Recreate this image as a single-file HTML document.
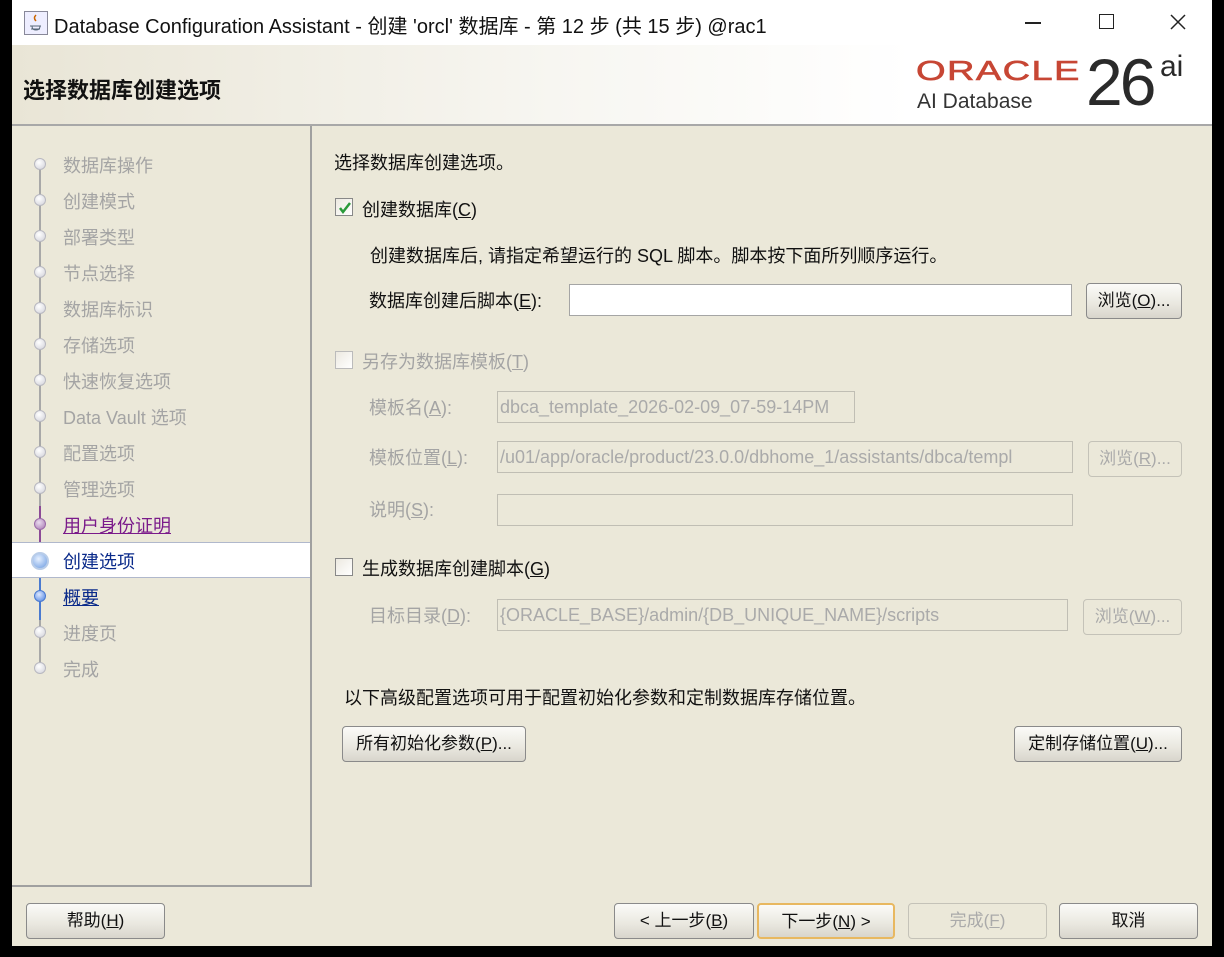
<!DOCTYPE html>
<html><head><meta charset="utf-8"><style>
*{margin:0;padding:0;box-sizing:border-box}
body{width:1224px;height:957px;background:#000;position:relative;overflow:hidden;font-family:"Liberation Sans","Noto Sans CJK SC",sans-serif;font-size:18px;color:#111}
.a{position:absolute;white-space:nowrap}
#win{position:absolute;left:12px;top:0;width:1200px;height:946px;background:#ebe8d9}
#title{position:absolute;left:0;top:0;width:1200px;height:45px;background:#fff}
#hdr{position:absolute;left:0;top:45px;width:1200px;height:81px;background:linear-gradient(90deg,#e9e5d6 0%,#f7f6f1 45%,#fff 75%);border-bottom:2px solid #a8a8a8}
#left{position:absolute;left:0;top:126px;width:300px;height:761px;border-right:2px solid #a0a0a0;border-bottom:2px solid #a0a0a0}
.nav{position:absolute;left:51px;color:#a4a4a4;font-size:18px}
.dot{position:absolute;left:22px;width:12px;height:12px;border-radius:50%;background:radial-gradient(circle at 40% 35%,#fff,#d0d0d8);border:1px solid #b8b8c0}
.btn{position:absolute;height:36px;border:1px solid #8a8a8a;border-radius:4px;background:linear-gradient(#fbfbf8,#e9e7df 60%,#d8d5cc);text-align:center;line-height:33px;font-size:17px;color:#111}
.dis{color:#aaa;border-color:#c4c2b8;background:#ebe8d9}
.inp{position:absolute;height:32px;border:1px solid #a5a5a5;background:#fff}
.inpd{position:absolute;height:32px;border:1px solid #c0beb4;background:#ebe8d9;color:#aaa;font-size:18px;line-height:30px;padding-left:2px;overflow:hidden;white-space:nowrap}
.cb{position:absolute;width:18px;height:18px;border:1px solid #888;background:linear-gradient(135deg,#ece9e0,#fff)}
.gray{color:#a4a4a4}
u{text-decoration:underline}
</style></head><body>
<div id="win">
<div id="title">
 <svg class="a" style="left:12px;top:11px" width="24" height="24" viewBox="0 0 24 24"><rect x="0.5" y="0.5" width="23" height="23" fill="#eef" stroke="#889"/><path d="M6 15h11M7 18h9M8 15q0 4 4 4t4-4" stroke="#567" fill="none"/><path d="M12 4q-3 3 0 6" stroke="#c60" fill="none" stroke-width="1.5"/></svg>
 <div class="a" style="left:42px;top:10px;font-size:20px">Database Configuration Assistant - 创建 'orcl' 数据库 - 第 12 步 (共 15 步) @rac1</div>
 <div class="a" style="left:1013px;top:22px;width:16px;height:1.5px;background:#222"></div>
 <div class="a" style="left:1087px;top:14px;width:15px;height:15px;border:1.5px solid #222"></div>
 <svg class="a" style="left:1158px;top:14px" width="16" height="16"><path d="M1 1L15 15M15 1L1 15" stroke="#222" stroke-width="1.5"/></svg>
</div>
<div id="hdr">
 <div class="a" style="left:11px;top:28px;font-size:22px;font-weight:bold">选择数据库创建选项</div>
 <div class="a" style="left:904px;top:11px;font-size:28px;line-height:30px;color:#c74634;letter-spacing:1px;transform:scaleX(1.36);transform-origin:left;-webkit-text-stroke:0.6px #c74634">ORACLE</div>
 <div class="a" style="left:905px;top:45px;font-size:21px;color:#333">AI Database</div>
 <div class="a" style="left:1074px;top:2px;font-size:66px;line-height:70px;color:#2a2a2a;letter-spacing:-3px">26</div>
 <div class="a" style="left:1148px;top:6px;font-size:30px;line-height:32px;color:#2a2a2a">ai</div>
</div>
<div id="left">
 <div class="a" style="left:27px;top:38px;width:2px;height:360px;background:#a8a8a8"></div>
 <div class="a" style="left:27px;top:380px;width:2px;height:54px;background:#8c4a96"></div>
 <div class="a" style="left:27px;top:434px;width:2px;height:60px;background:#4a7ad0"></div>
 <div class="a" style="left:27px;top:494px;width:2px;height:50px;background:#a8a8a8"></div>
 <div class="a" style="left:0;top:416px;width:298px;height:36px;background:#fff;border-top:1px solid #b0b8cc;border-bottom:1px solid #b0b8cc"></div>
 <div class="dot" style="top:32px"></div><div class="nav" style="top:26px">数据库操作</div>
 <div class="dot" style="top:68px"></div><div class="nav" style="top:62px">创建模式</div>
 <div class="dot" style="top:104px"></div><div class="nav" style="top:98px">部署类型</div>
 <div class="dot" style="top:140px"></div><div class="nav" style="top:134px">节点选择</div>
 <div class="dot" style="top:176px"></div><div class="nav" style="top:170px">数据库标识</div>
 <div class="dot" style="top:212px"></div><div class="nav" style="top:206px">存储选项</div>
 <div class="dot" style="top:248px"></div><div class="nav" style="top:242px">快速恢复选项</div>
 <div class="dot" style="top:284px"></div><div class="nav" style="top:278px">Data Vault 选项</div>
 <div class="dot" style="top:320px"></div><div class="nav" style="top:314px">配置选项</div>
 <div class="dot" style="top:356px"></div><div class="nav" style="top:350px">管理选项</div>
 <div class="dot" style="top:392px;background:radial-gradient(circle at 40% 35%,#eadcef,#a676b2);border-color:#9a6aa8"></div><div class="nav" style="top:386px;color:#7a1a8a"><u>用户身份证明</u></div>
 <div class="dot" style="top:426px;left:19px;width:18px;height:18px;background:radial-gradient(circle at 40% 35%,#e6f0ff,#6a9ae0);border:2px solid #b8cce8"></div><div class="nav" style="top:422px;color:#0a2a8a">创建选项</div>
 <div class="dot" style="top:464px;background:radial-gradient(circle at 40% 35%,#dde8ff,#4a80e0);border-color:#4a7ad0"></div><div class="nav" style="top:458px;color:#0a2a8a"><u>概要</u></div>
 <div class="dot" style="top:500px"></div><div class="nav" style="top:494px">进度页</div>
 <div class="dot" style="top:536px"></div><div class="nav" style="top:530px">完成</div>
</div>
<div class="a" style="left:322px;top:149px">选择数据库创建选项。</div>
<div class="cb" style="left:323px;top:198px"></div>
<svg class="a" style="left:325px;top:200px" width="16" height="16"><path d="M3 8l3 4 7-9" stroke="#2a9a3a" stroke-width="2.5" fill="none"/></svg>
<div class="a" style="left:350px;top:196px">创建数据库(<u>C</u>)</div>
<div class="a" style="left:358px;top:242px">创建数据库后, 请指定希望运行的 SQL 脚本。脚本按下面所列顺序运行。</div>
<div class="a" style="left:357px;top:287px">数据库创建后脚本(<u>E</u>):</div>
<div class="inp" style="left:557px;top:284px;width:503px"></div>
<div class="btn" style="left:1074px;top:283px;width:96px">浏览(<u>O</u>)...</div>
<div class="cb" style="left:323px;top:351px;border-color:#bbb"></div>
<div class="a gray" style="left:350px;top:348px">另存为数据库模板(<u>T</u>)</div>
<div class="a gray" style="left:357px;top:394px">模板名(<u>A</u>):</div>
<div class="inpd" style="left:485px;top:391px;width:358px">dbca_template_2026-02-09_07-59-14PM</div>
<div class="a gray" style="left:357px;top:444px">模板位置(<u>L</u>):</div>
<div class="inpd" style="left:485px;top:441px;width:576px">/u01/app/oracle/product/23.0.0/dbhome_1/assistants/dbca/templ</div>
<div class="btn dis" style="left:1076px;top:441px;width:94px">浏览(<u>R</u>)...</div>
<div class="a gray" style="left:357px;top:496px">说明(<u>S</u>):</div>
<div class="inpd" style="left:485px;top:494px;width:576px"></div>
<div class="cb" style="left:323px;top:558px"></div>
<div class="a" style="left:350px;top:555px">生成数据库创建脚本(<u>G</u>)</div>
<div class="a gray" style="left:357px;top:602px">目标目录(<u>D</u>):</div>
<div class="inpd" style="left:485px;top:599px;width:571px">{ORACLE_BASE}/admin/{DB_UNIQUE_NAME}/scripts</div>
<div class="btn dis" style="left:1071px;top:599px;width:99px">浏览(<u>W</u>)...</div>
<div class="a" style="left:332px;top:684px">以下高级配置选项可用于配置初始化参数和定制数据库存储位置。</div>
<div class="btn" style="left:330px;top:726px;width:184px">所有初始化参数(<u>P</u>)...</div>
<div class="btn" style="left:1002px;top:726px;width:168px">定制存储位置(<u>U</u>)...</div>
<div class="btn" style="left:14px;top:903px;width:139px">帮助(<u>H</u>)</div>
<div class="btn" style="left:602px;top:903px;width:140px">&lt; 上一步(<u>B</u>)</div>
<div class="btn" style="left:745px;top:903px;width:138px;border:2px solid #e8b860">下一步(<u>N</u>) &gt;</div>
<div class="btn dis" style="left:896px;top:903px;width:139px">完成(<u>F</u>)</div>
<div class="btn" style="left:1047px;top:903px;width:139px">取消</div>
</div>
</body></html>
